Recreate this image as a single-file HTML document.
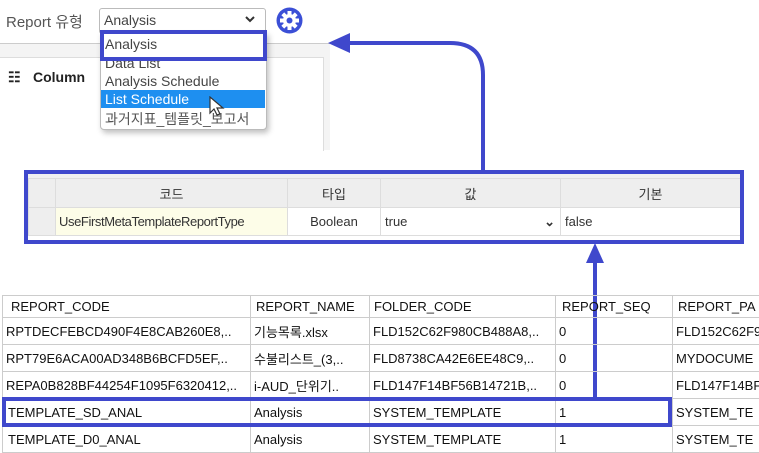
<!DOCTYPE html><html><head><meta charset="utf-8"><style>
body{margin:0;width:759px;height:451px;position:relative;background:#fff;font-family:"Liberation Sans","Noto Sans CJK KR",sans-serif;overflow:hidden}
.a{position:absolute}
.t{position:absolute;font-size:13px;color:#222;white-space:nowrap}
table{border-collapse:collapse;position:absolute;table-layout:fixed}
td{white-space:nowrap;overflow:hidden;box-sizing:border-box}
</style></head><body>
<div class="a" style="left:0;top:0;width:330px;height:150px;background:#fff"></div>
<div class="a" style="left:0;top:43px;width:330px;height:1px;background:#ccc"></div>
<div class="a" style="left:0;top:44px;width:330px;height:106px;background:#f4f4f4"></div>
<div class="a" style="left:0;top:57px;width:323px;height:93px;background:#fff;border:1px solid #ddd;border-left:none;border-bottom:none"></div>
<div class="t" style="left:6px;top:11px;font-size:15px;color:#555">Report 유형</div>
<div class="a" style="left:99px;top:8px;width:165px;height:24px;border:1px solid #bbb;border-radius:3px;background:#fff"></div>
<div class="t" style="left:104px;top:12px;font-size:14px;color:#444">Analysis</div>
<svg class="a" style="left:244px;top:14px" width="12" height="10"><path d="M2 3l4 4 4-4" stroke="#333" stroke-width="2" fill="none"/></svg>
<svg class="a" style="left:276px;top:7px" width="27" height="27" viewBox="0 0 27 27"><circle cx="13.5" cy="13.5" r="13" fill="#3b4fd6"/><g fill="#fff"><circle cx="13.5" cy="13.5" r="6.5"/><rect x="11.5" y="4" width="4" height="19"/><rect x="4" y="11.5" width="19" height="4"/><rect x="11.5" y="4" width="4" height="19" transform="rotate(45 13.5 13.5)"/><rect x="11.5" y="4" width="4" height="19" transform="rotate(-45 13.5 13.5)"/></g><circle cx="13.5" cy="13.5" r="3" fill="#3b4fd6"/></svg>
<div class="t" style="left:8px;top:69px;font-size:14px;font-weight:bold">☷</div>
<div class="t" style="left:33px;top:69px;font-size:14px;font-weight:bold">Column</div>
<div class="a" style="left:100px;top:32px;width:165px;height:96px;background:#fff;border:1px solid #bbb;border-radius:0 0 4px 4px;box-shadow:2px 3px 6px rgba(0,0,0,.25)"></div>
<div class="t" style="left:105px;top:36px;font-size:14px;color:#444">Analysis</div>
<div class="t" style="left:105px;top:55px;font-size:14px;color:#444">Data List</div>
<div class="t" style="left:105px;top:73px;font-size:14px;color:#444">Analysis Schedule</div>
<div class="a" style="left:101px;top:90px;width:164px;height:18px;background:#1e8ff0"></div>
<div class="t" style="left:105px;top:91px;font-size:14px;color:#fff">List Schedule</div>
<div class="t" style="left:105px;top:109px;font-size:14px;color:#555">과거지표_템플릿_보고서</div>
<svg class="a" style="left:208px;top:96px" width="18" height="22"><path d="M2 1v16l4-4 3 6 3-1-3-6h6z" fill="#fff" stroke="#333" stroke-width="1.2"/></svg>
<div class="a" style="left:100px;top:30px;width:159px;height:23px;border:4px solid #3f48cc"></div>
<svg class="a" style="left:0;top:0" width="759" height="451">
<path d="M483 170 V75 Q483 43 450 43 H345" stroke="#3f48cc" stroke-width="4" fill="none"/>
<path d="M328 43 l22 -10 v20z" fill="#3f48cc"/>
<path d="M595 400 V258" stroke="#3f48cc" stroke-width="4" fill="none"/>
<path d="M595 243 l-9 20 h18z" fill="#3f48cc"/>
</svg>
<div class="a" style="left:28px;top:174px;width:712px;height:62px;background:#f0f0f0"></div>
<table style="left:28px;top:178px;width:712px;font-size:13px;color:#333">
<colgroup><col style="width:27px"><col style="width:232px"><col style="width:93px"><col style="width:180px"><col style="width:180px"></colgroup>
<tr style="height:29px;background:#eee"><td style="border:1px solid #ddd"></td><td style="border:1px solid #ddd;text-align:center">코드</td><td style="border:1px solid #ddd;text-align:center">타입</td><td style="border:1px solid #ddd;text-align:center">값</td><td style="border:1px solid #ddd;text-align:center">기본</td></tr>
<tr style="height:28px"><td style="border:1px solid #ddd;background:#eee"></td><td style="border:1px solid #ddd;background:#fdfde8;padding-left:3px;letter-spacing:-0.4px">UseFirstMetaTemplateReportType</td><td style="border:1px solid #ddd;background:#fff;text-align:center">Boolean</td><td style="border:1px solid #ddd;background:#fff;padding-left:4px">true<span style="float:right;font-weight:bold;padding-right:4px">⌄</span></td><td style="border:1px solid #ddd;background:#fff;padding-left:4px">false</td></tr>
</table>
<div class="a" style="left:24px;top:170px;width:712px;height:66px;border:4px solid #3f48cc"></div>
<table style="left:2px;top:295px;width:770px;font-size:13px;color:#111">
<colgroup><col style="width:248px"><col style="width:119px"><col style="width:186px"><col style="width:117px"><col style="width:100px"></colgroup>
<tr style="height:22px"><td style="border:1px solid #ccc;padding-left:8px">REPORT_CODE</td><td style="border:1px solid #ccc;padding-left:5px">REPORT_NAME</td><td style="border:1px solid #ccc;padding-left:4px">FOLDER_CODE</td><td style="border:1px solid #ccc;padding-left:6px">REPORT_SEQ</td><td style="border:1px solid #ccc;padding-left:5px">REPORT_PA</td></tr>
<tr style="height:27px"><td style="border:1px solid #ccc;padding-left:3px">RPTDECFEBCD490F4E8CAB260E8,..</td><td style="border:1px solid #ccc;padding-left:3px">기능목록.xlsx</td><td style="border:1px solid #ccc;padding-left:3px">FLD152C62F980CB488A8,..</td><td style="border:1px solid #ccc;padding-left:3px">0</td><td style="border:1px solid #ccc;padding-left:3px">FLD152C62F9</td></tr>
<tr style="height:27px"><td style="border:1px solid #ccc;padding-left:3px">RPT79E6ACA00AD348B6BCFD5EF,..</td><td style="border:1px solid #ccc;padding-left:3px">수불리스트_(3,..</td><td style="border:1px solid #ccc;padding-left:3px">FLD8738CA42E6EE48C9,..</td><td style="border:1px solid #ccc;padding-left:3px">0</td><td style="border:1px solid #ccc;padding-left:3px">MYDOCUME</td></tr>
<tr style="height:27px"><td style="border:1px solid #ccc;padding-left:3px">REPA0B828BF44254F1095F6320412,..</td><td style="border:1px solid #ccc;padding-left:3px">i-AUD_단위기..</td><td style="border:1px solid #ccc;padding-left:3px">FLD147F14BF56B14721B,..</td><td style="border:1px solid #ccc;padding-left:3px">0</td><td style="border:1px solid #ccc;padding-left:3px">FLD147F14BF</td></tr>
<tr style="height:27px"><td style="border:1px solid #ccc;padding-left:5px">TEMPLATE_SD_ANAL</td><td style="border:1px solid #ccc;padding-left:3px">Analysis</td><td style="border:1px solid #ccc;padding-left:3px">SYSTEM_TEMPLATE</td><td style="border:1px solid #ccc;padding-left:3px">1</td><td style="border:1px solid #ccc;padding-left:3px">SYSTEM_TE</td></tr>
<tr style="height:27px"><td style="border:1px solid #ccc;padding-left:5px">TEMPLATE_D0_ANAL</td><td style="border:1px solid #ccc;padding-left:3px">Analysis</td><td style="border:1px solid #ccc;padding-left:3px">SYSTEM_TEMPLATE</td><td style="border:1px solid #ccc;padding-left:3px">1</td><td style="border:1px solid #ccc;padding-left:3px">SYSTEM_TE</td></tr>
</table>
<div class="a" style="left:2px;top:397px;width:662px;height:22px;border:4px solid #3f48cc"></div>
</body></html>
